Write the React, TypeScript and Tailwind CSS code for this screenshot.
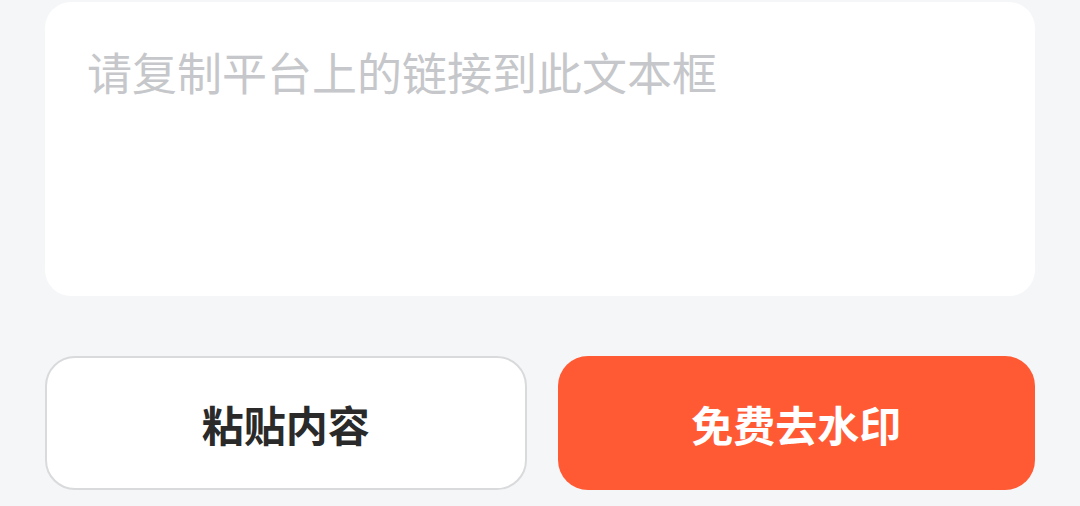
import React from "react";

export default function App() {
  return (
    <div
      className="w-[1080px] h-[506px] bg-[#f5f6f8] px-[45px] pt-[2px] overflow-hidden"
      style={{ fontFamily: '"Noto Sans CJK SC", "Noto Sans", sans-serif' }}
    >
      <div className="h-[294px] w-full rounded-[26px] bg-white pl-[42px] pt-[37px]">
        <p className="text-[45px] leading-[66px] text-[#c6c7ca]">请复制平台上的链接到此文本框</p>
      </div>
      <div className="mt-[60px] flex gap-[31px]">
        <button className="flex h-[134px] flex-1 items-center justify-center rounded-[30px] border-2 border-[#d9dadc] bg-white text-[42px] font-bold text-[#2a2a2a]">
          粘贴内容
        </button>
        <button className="flex h-[134px] flex-1 items-center justify-center rounded-[30px] bg-[#ff5a33] text-[42px] font-bold text-white">
          免费去水印
        </button>
      </div>
    </div>
  );
}
